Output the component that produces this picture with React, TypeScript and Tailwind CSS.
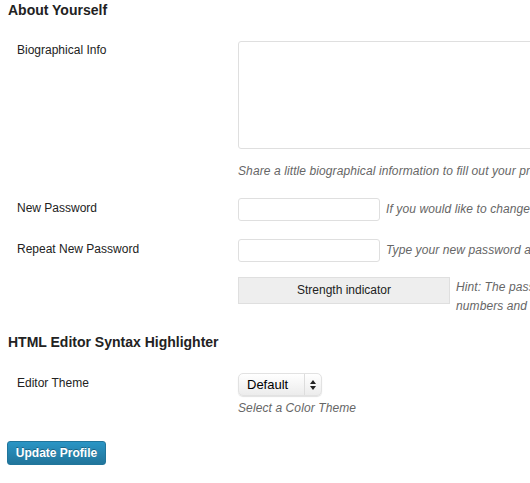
import { useState } from 'react'

function Label({ children }: { children: React.ReactNode }) {
  return <div className="w-[238px] shrink-0 pl-[17px] leading-[18px] text-[#222]">{children}</div>
}

export default function App() {
  const [bio, setBio] = useState('')

  return (
    <div className="w-[530px] h-[483px] overflow-hidden bg-white text-[12px] text-[#333] whitespace-nowrap font-['Liberation_Sans',Arial,sans-serif]">
      <h3 className="pl-[8px] text-[14px] font-bold leading-[20px] text-[#222]">About Yourself</h3>

      {/* bio */}
      <div className="mt-[21px] flex">
        <Label>Biographical Info</Label>
        <div className="flex flex-col">
          <textarea
            value={bio}
            onChange={e => setBio(e.target.value)}
            className="w-[400px] h-[108px] rounded-[3px] border border-[#dfdfdf] resize-none outline-none"
          />
          <p className="mt-[13px] italic leading-[18px] text-[#666] tracking-[0.1px]">
            Share a little biographical information to fill out your profile. This may be shown publicly.
          </p>
        </div>
      </div>

      {/* passwords */}
      <div className="mt-[18px] flex">
        <div className="shrink-0 pt-[1px]"><Label>New Password</Label></div>
        <input type="password" className="w-[142px] h-[23px] shrink-0 rounded-[3px] border border-[#dfdfdf] outline-none" />
        <span className="ml-[6px] italic leading-[23px] text-[#666] tracking-[0.1px]">
          If you would like to change the password type a new one. Otherwise leave this blank.
        </span>
      </div>
      <div className="mt-[18px] flex">
        <div className="shrink-0 pt-[1px]"><Label>Repeat New Password</Label></div>
        <input type="password" className="w-[142px] h-[23px] shrink-0 rounded-[3px] border border-[#dfdfdf] outline-none" />
        <span className="ml-[6px] italic leading-[23px] text-[#666] tracking-[0.1px]">Type your new password again.</span>
      </div>
      <div className="mt-[15px] flex">
        <div className="w-[238px] shrink-0" />
        <div className="w-[212px] h-[27px] shrink-0 border border-[#dfdfdf] bg-[#eee] text-center leading-[25px] text-[#222]">
          Strength indicator
        </div>
        <p className="ml-[6px] mt-[1px] italic leading-[19px] text-[#666] tracking-[0.1px]">
          Hint: The password should be at least seven characters long. To make it stronger, use upper and lower case letters,
          <br />
          numbers and symbols like ! " ? $ % ^ &amp; ).
        </p>
      </div>

      <h3 className="mt-[16px] pl-[8px] text-[14px] font-bold leading-[20px] text-[#222]">HTML Editor Syntax Highlighter</h3>

      <div className="mt-[21px] flex">
        <div className="shrink-0 pt-[1px]"><Label>Editor Theme</Label></div>
        <div className="flex flex-col">
          <div className="flex w-[84px] h-[23px] rounded-[5px] border border-[#e2e2e2] bg-gradient-to-b from-white to-[#ececec] shadow-[0_1px_1px_rgba(0,0,0,0.12)]">
            <span className="flex-1 pl-[8px] leading-[21px] text-[13px] text-black">Default</span>
            <span className="w-[17px] border-l border-[#ddd] flex items-center justify-center">
              <svg width="6" height="10" viewBox="0 0 6 10">
                <path d="M3 0 L6 4 L0 4 Z M0 6 L6 6 L3 10 Z" fill="#222" />
              </svg>
            </span>
          </div>
          <p className="mt-[3px] italic leading-[18px] text-[#666] tracking-[0.1px]">Select a Color Theme</p>
        </div>
      </div>

      <div className="mt-[24px] pl-[7px]">
        <button className="w-[99px] h-[24px] rounded-[3px] border border-[#21759b] bg-gradient-to-b from-[#2a95c5] to-[#21759b] text-white font-bold text-[12px] [text-shadow:0_-1px_0_rgba(0,0,0,0.3)]">
          Update Profile
        </button>
      </div>
    </div>
  )
}
